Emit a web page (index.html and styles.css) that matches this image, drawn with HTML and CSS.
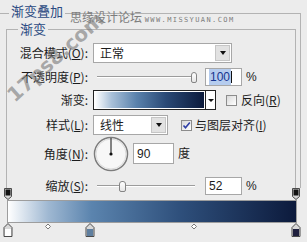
FILE: index.html
```html
<html>
    <head>
        <title>渐变叠加</title>
        <link rel="stylesheet" href="styles.css">
    </head>
    <body>
        <fieldset class="outer">
            <legend>渐变叠加</legend>
            <fieldset class="inner">
                <legend>渐变</legend>
                <div class="row r-mode">
                    <span class="lbl">混合模式(<u>O</u>):</span>
                    <div class="select wide"><span class="val">正常</span><span class="btn"><i class="arrow"></i></span></div>
                </div>
                <div class="row r-opacity">
                    <span class="lbl">不透明度(<u>P</u>):</span>
                    <div class="slider"><span class="thumb" style="margin-left:98px"></span></div>
                    <div class="field"><span class="sel">100</span><span class="caret"></span></div>
                    <span class="unit">%</span>
                </div>
                <div class="row r-grad">
                    <span class="lbl">渐变:</span>
                    <div class="swatch"><span class="grad"></span><span class="drop"><i class="arrow small"></i></span></div>
                    <span class="check"></span>
                    <span class="opt">反向(<u>R</u>)</span>
                </div>
                <div class="row r-style">
                    <span class="lbl">样式(<u>L</u>):</span>
                    <div class="select narrow"><span class="val">线性</span><span class="btn"><i class="arrow"></i></span></div>
                    <span class="check on">
                        <svg width="9" height="9" viewBox="0 0 9 9"><path d="M1.5 4.5 L3.5 6.8 L7.8 1.5" fill="none" stroke="#2f3fa6" stroke-width="1.6"/></svg>
                    </span>
                    <span class="opt">与图层对齐(<u>I</u>)</span>
                </div>
                <div class="row r-angle">
                    <span class="lbl">角度(<u>N</u>):</span>
                    <svg class="dial" width="36" height="36" viewBox="0 0 36 36">
                        <circle cx="18" cy="18" r="16.5" fill="#f7f7f7" stroke="#7c7c7c" stroke-width="1.5"/>
                        <circle cx="18" cy="18" r="15" fill="none" stroke="#dcdcdc" stroke-width="1"/>
                        <line x1="18" y1="18" x2="18" y2="2" stroke="#111" stroke-width="1"/>
                        <circle cx="18" cy="18" r="1.6" fill="#111"/>
                    </svg>
                    <div class="field angle">90</div>
                    <span class="unit">度</span>
                </div>
                <div class="row r-scale">
                    <span class="lbl">缩放(<u>S</u>):</span>
                    <div class="slider"><span class="thumb" style="margin-left:26px"></span></div>
                    <div class="field num">52</div>
                    <span class="unit">%</span>
                </div>
            </fieldset>
        </fieldset>

        <div class="editor">
            <svg class="stops" width="307" height="12">
                <path d="M4.5 0.5 H11.5 V8.5 L8 11.5 L4.5 8.5 Z" fill="#d4d4d4" stroke="#4a4a4a"/>
                <rect x="5.5" y="1.5" width="5" height="6" fill="#111"/>
                <path d="M292.5 0.5 H299.5 V8.5 L296 11.5 L292.5 8.5 Z" fill="#d4d4d4" stroke="#4a4a4a"/>
                <rect x="293.5" y="1.5" width="5" height="6" fill="#111"/>
            </svg>
            <div class="bar"></div>
            <svg class="stops" width="307" height="16">
                <path d="M8 0.5 L12 4.5 V13.5 H4 V4.5 Z" fill="#d8d8d8" stroke="#4a4a4a"/>
                <rect x="5" y="6" width="6" height="7" fill="#fff"/>
                <path d="M48 1 L50.5 3.5 L48 6 L45.5 3.5 Z" fill="#fff" stroke="#7a7a7a"/>
                <path d="M90 0.5 L94 4.5 V13.5 H86 V4.5 Z" fill="#d8d8d8" stroke="#4a4a4a"/>
                <rect x="87" y="6" width="6" height="7" fill="#5f7f9f"/>
                <path d="M194 1 L196.5 3.5 L194 6 L191.5 3.5 Z" fill="#fff" stroke="#7a7a7a"/>
                <path d="M296 0.5 L300 4.5 V13.5 H292 V4.5 Z" fill="#d8d8d8" stroke="#4a4a4a"/>
                <rect x="293" y="6" width="6" height="7" fill="#1e1f3d"/>
            </svg>
        </div>

        <div class="wm-site">思缘设计论坛 <span class="wm-url">WWW.MISSYUAN.COM</span></div>
        <div class="wm-logo">17ps8.com</div>
    </body>
</html>
```

FILE: styles.css
```css
*{
    box-sizing: border-box;
}
body{
    margin: 0;
    width: 307px;
    height: 242px;
    overflow: hidden;
    position: relative;
    background: #ececec;
    color: #1c1c1c;
    font-family: "Noto Sans CJK SC", "Liberation Sans", sans-serif;
    font-size: 12px;
    line-height: 14px;
}
u{
    text-decoration-thickness: 1px;
    text-underline-offset: 1px;
}

/* group boxes */
.outer{
    margin: 4px 6px 0 0;
    padding: 0 4px 0 6px;
    min-width: 0;
    border: 1px solid #b3b3b3;
    border-left: none;
    border-bottom: none;
}
.outer > legend{
    margin-left: 3px;
    padding: 0 2px 4px;
    font-size: 13px;
    line-height: 14px;
    color: #2b4a82;
}
.inner{
    margin: 0;
    padding: 0;
    min-width: 0;
    border: 1px solid #b3b3b3;
    border-bottom: none;
}
.inner > legend{
    margin-left: 11px;
    padding: 0 2px;
    font-size: 13px;
    line-height: 14px;
    color: #2b4a82;
}

/* rows */
.row{
    display: flex;
    align-items: center;
}
.lbl{
    flex: none;
    width: 81px;
    margin-right: 5px;
    text-align: right;
    white-space: nowrap;
}
.r-mode{ margin-top: 7px; height: 20px; }
.r-opacity{ margin-top: 5px; height: 18px; }
.r-grad{ margin-top: 4px; height: 20px; }
.r-style{ margin-top: 5px; height: 20px; }
.r-angle{ margin-top: 1px; height: 35px; }
.r-scale{ margin-top: 6px; height: 18px; margin-bottom: -7px; }

/* dropdowns */
.select{
    display: flex;
    height: 20px;
    background: #fff;
    border: 1px solid #a7a7a7;
}
.select.wide{ width: 139px; }
.select.narrow{ width: 75px; }
.select .val{
    flex: 1;
    padding-left: 6px;
    line-height: 18px;
}
.select .btn{
    width: 15px;
    margin: 1px;
    background: #e2e2e2;
    border: 1px solid #c6c6c6;
    display: flex;
    align-items: center;
    justify-content: center;
}
.arrow{
    width: 0;
    height: 0;
    border-top: 4px solid #111;
    border-left: 3.5px solid transparent;
    border-right: 3.5px solid transparent;
}
.arrow.small{
    border-top-width: 3px;
    border-left-width: 3px;
    border-right-width: 3px;
}

/* sliders */
.slider{
    width: 104px;
    height: 12px;
    margin-right: 8px;
    display: flex;
    align-items: center;
    background:
        linear-gradient(#9c9c9c, #9c9c9c) no-repeat 4px 5px / 98px 1px,
        linear-gradient(#fff, #fff) no-repeat 4px 6px / 98px 1px;
}
.thumb{
    width: 7px;
    height: 11px;
    background: linear-gradient(#fff, #e6e6e6);
    border: 1px solid #858585;
    border-radius: 3px 3px 2px 2px;
}

/* text fields */
.field{
    width: 37px;
    height: 18px;
    padding-left: 3px;
    background: #fff;
    border: 1px solid #a7a7a7;
    font-family: "Liberation Sans", sans-serif;
    font-size: 12px;
    line-height: 16px;
    display: flex;
    align-items: center;
}
.field.angle{
    width: 41px;
    height: 21px;
    margin-left: 4px;
}
.sel{
    background: #b5ccee;
    color: #17368f;
    padding: 0 1px;
}
.caret{
    width: 1px;
    height: 12px;
    background: #111;
}
.unit{
    margin-left: 4px;
    font-family: "Liberation Sans", "Noto Sans CJK SC", sans-serif;
}

/* gradient swatch */
.swatch{
    display: flex;
    width: 123px;
    height: 20px;
    background: #fff;
    border: 1px solid #222;
}
.swatch .grad{
    flex: 1;
    margin: 1px;
    background: linear-gradient(90deg, #fff 0%, #a9c0d8 15%, #5a82ac 38%, #2b4a76 65%, #0c1a3b 100%);
}
.swatch .drop{
    width: 10px;
    border-left: 1px solid #222;
    display: flex;
    align-items: center;
    justify-content: center;
}

/* checkboxes */
.check{
    flex: none;
    width: 11px;
    height: 11px;
    margin-left: 10px;
    border: 1px solid #8c8c8c;
    background: linear-gradient(135deg, #d9d9d9, #fff);
    display: flex;
    align-items: center;
    justify-content: center;
}
.r-style .check{ margin-left: 13px; }
.opt{
    margin-left: 4px;
    white-space: nowrap;
}
.r-style .opt{ margin-left: 3px; }

.dial{
    display: block;
    flex: none;
}

/* gradient editor */
.editor svg{
    display: block;
}
.bar{
    margin-left: 7px;
    width: 290px;
    height: 23px;
    border: 1px solid #9d9d9d;
    background: linear-gradient(90deg, #fff 0%, #9fb8d2 14%, #5b84ae 29%, #2e4f7b 60%, #0c1a3c 100%);
}

/* watermarks */
.wm-site{
    position: absolute;
    left: 70px;
    top: 10px;
    color: #7d7d7d;
    font-size: 12px;
    white-space: nowrap;
}
.wm-url{
    font-family: "DejaVu Sans Mono", monospace;
    font-size: 7px;
    letter-spacing: 1.4px;
}
.wm-logo{
    position: absolute;
    left: -4px;
    top: 50px;
    width: 110px;
    line-height: 22px;
    text-align: center;
    font-family: "DejaVu Sans", sans-serif;
    font-weight: bold;
    font-size: 20px;
    color: rgba(120, 120, 120, 0.6);
    transform: rotate(-42deg);
}
```
